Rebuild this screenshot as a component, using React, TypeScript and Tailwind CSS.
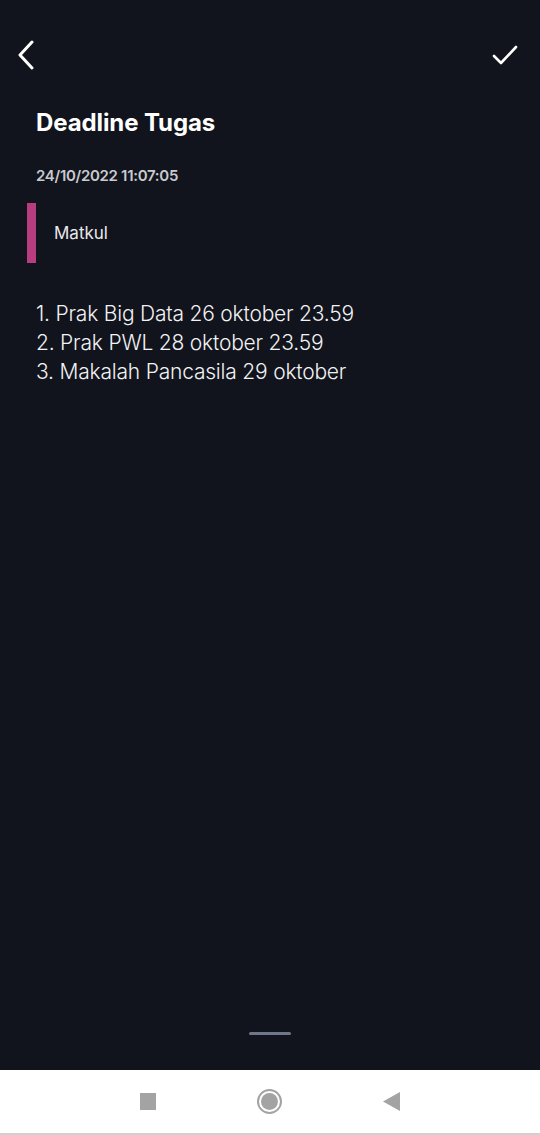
export default function App() {
  return (
    <div className="flex h-[1135px] w-[540px] flex-col bg-[#11141c] font-['Inter','Roboto',sans-serif] text-white">
      <div className="flex flex-1 flex-col">
        <div className="flex h-[56px] items-end justify-between pl-[17px] pr-[22px]">
          <svg width="18" height="30" viewBox="0 0 18 30" className="mb-[-14px]">
            <path d="M15 2 L3 15 L15 28" fill="none" stroke="white" strokeWidth="3" strokeLinecap="round" strokeLinejoin="round" />
          </svg>
          <svg width="26" height="22" viewBox="0 0 26 22" className="mb-[-10px]">
            <path d="M2 12 L9 19 L24 3" fill="none" stroke="white" strokeWidth="2.6" strokeLinecap="round" strokeLinejoin="round" />
          </svg>
        </div>
        <div className="px-[36px] pt-[52px]">
          <h1 className="text-[24px] font-bold leading-[30px] tracking-[-0.1px]">Deadline Tugas</h1>
          <p className="mt-[29px] text-[15px] font-semibold leading-[18px] tracking-[-0.3px] text-[#c9cad0]">
            24/10/2022 11:07:05
          </p>
        </div>
        <div className="ml-[27px] mt-[18px] flex h-[60px] items-center">
          <div className="h-full w-[9px] bg-[#b83d7f]" />
          <span className="ml-[18px] text-[17px] leading-none text-[#e8e8ec]">Matkul</span>
        </div>
        <div className="px-[36px] pt-[36px] text-[21px] font-light leading-[29px] tracking-[-0.2px] text-[#f2f2f4]">
          <p>1. Prak Big Data 26 oktober 23.59</p>
          <p>2. Prak PWL 28 oktober 23.59</p>
          <p>3. Makalah Pancasila 29 oktober</p>
        </div>
        <div className="mt-auto mb-[35px] flex justify-center">
          <div className="h-[3px] w-[42px] rounded-full bg-[#6f7688]" />
        </div>
      </div>
      <div className="flex h-[63px] items-center justify-center bg-white">
        <div className="flex w-[260px] items-center justify-between">
          <div className="h-[17px] w-[16px] bg-[#a3a3a3]" />
          <div className="flex h-[25px] w-[25px] items-center justify-center rounded-full border-[2px] border-[#a3a3a3]">
            <div className="h-[17px] w-[17px] rounded-full bg-[#a3a3a3]" />
          </div>
          <svg width="17" height="19" viewBox="0 0 17 19">
            <path d="M0 9.5 L17 0 L17 19 Z" fill="#a3a3a3" />
          </svg>
        </div>
      </div>
      <div className="h-[2px] bg-[#d0d0d0]" />
    </div>
  );
}
